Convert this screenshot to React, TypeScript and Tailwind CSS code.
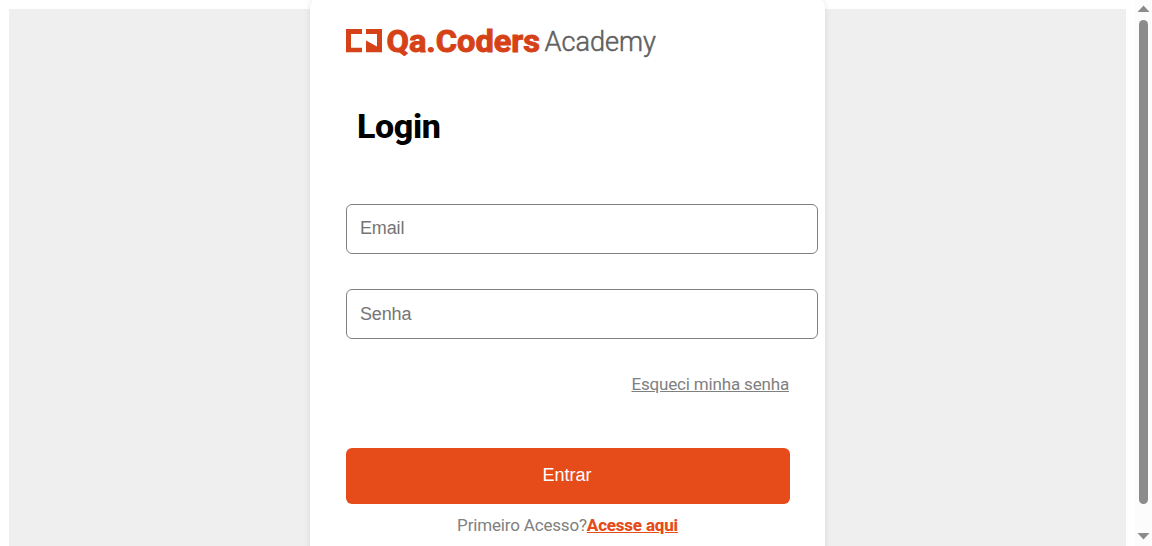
export default function App() {
  return (
    <div className="flex h-[546px] w-[1152px] overflow-hidden bg-white font-['Roboto',sans-serif]">
      <div className="flex h-full w-[1135px] justify-center bg-white pl-[9px] pr-[9px]">
        <div className="mt-[9px] h-[537px] w-[301px] shrink-0 bg-[#efefef]" />
        <main className="z-10 -mt-1 flex h-[560px] w-[515px] shrink-0 flex-col rounded-t-[12px] bg-white pl-9 pr-[35px] shadow-[0_0_6px_rgba(0,0,0,0.1)]">
          <svg className="mt-[20px] h-[50px] w-[320px] overflow-visible" viewBox="0 0 320 50">
            <path d="M0 13h16v5H5v13.7h11v4.6H0zM20 13h16v23.3H20V24.5l11 6V18H20z" fill="#d64218" />
            <text x="40.5" y="35.6" textLength="153.5" lengthAdjust="spacingAndGlyphs" fontFamily="Roboto" fontWeight="700" fontSize="31.5" fill="#d64218" stroke="#d64218" strokeWidth="1">Qa.Coders</text>
            <text x="198.5" y="34.7" textLength="111.5" lengthAdjust="spacingAndGlyphs" fontFamily="Roboto" fontWeight="300" fontSize="27" fill="#606060" stroke="#606060" strokeWidth="0.5">Academy</text>
          </svg>
          <h1 className="ml-[11px] mt-[38px] text-[34px] font-extrabold leading-[44px] tracking-[-0.35px] text-black">Login</h1>
          <input aria-label="Email" placeholder="Email" className="mt-14 h-[50px] w-[472px] rounded-md border border-[#808080] px-[13px] pb-[2px] font-['Liberation_Sans',sans-serif] text-[18px] tracking-[-0.15px] placeholder:text-[#757575]" />
          <input aria-label="Senha" type="password" placeholder="Senha" className="mt-[35px] h-[50px] w-[472px] rounded-md border border-[#808080] px-[13px] font-['Liberation_Sans',sans-serif] text-[18px] tracking-[-0.15px] placeholder:text-[#757575]" />
          <a className="mr-[1px] mt-[34px] self-end text-[17px] leading-[22px] tracking-[-0.17px] text-[#808080] underline">Esqueci minha senha</a>
          <button className="mt-[53px] h-14 rounded-md bg-[#e64c19] pb-[2px] pr-[2px] font-['Liberation_Sans',sans-serif] text-[18px] text-white">Entrar</button>
          <p className="mt-[10px] pr-[1px] text-center text-[17px] leading-[22px] tracking-[-0.17px] text-[#808080]">Primeiro Acesso?<a className="font-extrabold tracking-[-0.2px] text-[#e64c19] underline">Acesse aqui</a></p>
        </main>
        <div className="mt-[9px] h-[537px] w-[301px] shrink-0 bg-[#efefef]" />
      </div>
      <div className="flex w-[17px] flex-col items-center bg-[#fcfcfc]">
        <svg className="h-[20px] w-[17px]" viewBox="0 0 17 20"><path d="M2.5 12 8.5 5.5l6 6.5z" fill="#8b8b8b" /></svg>
        <div className="h-[484px] w-[9px] rounded-full bg-[#8b8b8b]" />
        <svg className="mt-[26px] h-[16px] w-[17px]" viewBox="0 0 17 16"><path d="M2.5 3h12l-6 6.5z" fill="#8b8b8b" /></svg>
      </div>
    </div>
  );
}
